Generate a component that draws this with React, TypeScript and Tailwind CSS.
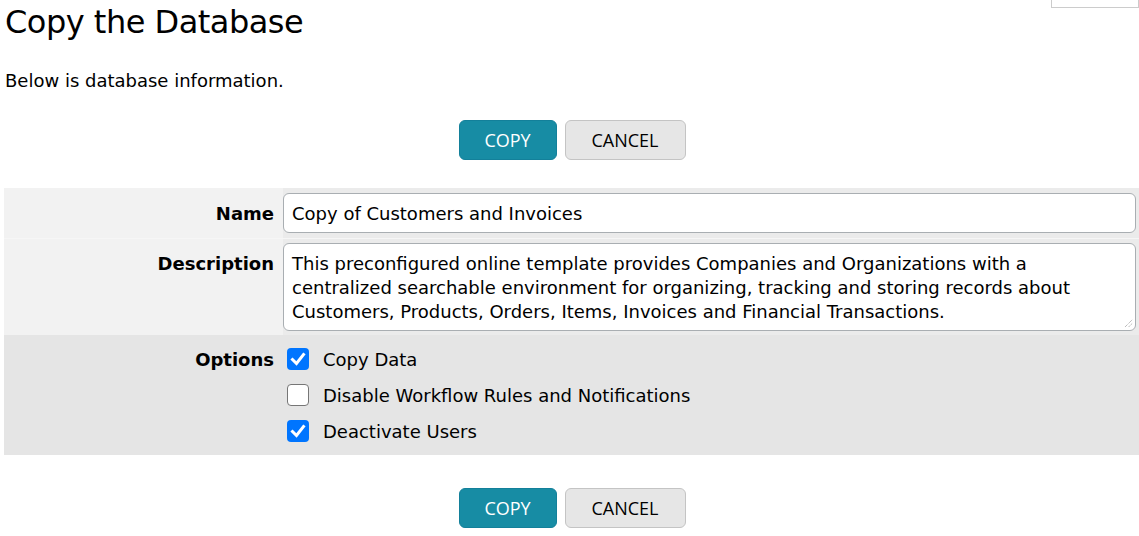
import React from 'react';

const options = [
  { label: 'Copy Data', checked: true },
  { label: 'Disable Workflow Rules and Notifications', checked: false },
  { label: 'Deactivate Users', checked: true },
];

function Buttons() {
  return (
    <div className="flex justify-center gap-2 pl-[5px] font-['Open_Sans',sans-serif] text-[18px] font-medium">
      <button className="w-[98px] h-10 rounded-md bg-[#178ca4] border border-[#13809a] text-white">COPY</button>
      <button className="w-[121px] h-10 rounded-md bg-[#e6e6e6] border border-[#c4c4c4] text-black">CANCEL</button>
    </div>
  );
}

function Check({ checked }: { checked: boolean }) {
  if (!checked) {
    return <div className="w-[22px] h-[22px] rounded-[4px] border-[1.5px] border-[#767676] bg-white" />;
  }
  return (
    <div className="w-[22px] h-[22px] rounded-[4px] bg-[#0075ff] flex items-center justify-center">
      <svg viewBox="0 0 22 22" className="w-[22px] h-[22px]">
        <path d="M5.5 11.5 L9.5 15.5 L16.5 6.5" fill="none" stroke="white" strokeWidth="3" strokeLinecap="square" />
      </svg>
    </div>
  );
}

export default function App() {
  return (
    <div className="relative min-h-screen bg-white text-black font-['DejaVu_Sans',Verdana,sans-serif]">
      <div className="absolute top-0 right-0 w-[88px] h-[8px] border border-t-0 border-[#cccccc]" />

      <div className="pl-[5px] pt-0">
        <h1 className="text-[32px] leading-[44px] tracking-[-0.5px]">Copy the Database</h1>
        <p className="mt-[25px] text-[18px] leading-[24px]">Below is database information.</p>
      </div>

      <div className="mt-[27px]">
        <Buttons />
      </div>

      <div className="mt-[28px] ml-[4px] text-[18px]">
        {/* Name */}
        <div className="flex">
          <div className="w-[279px] shrink-0 bg-[#f2f2f2] pr-[9px] pt-[14px] text-right font-bold leading-[24px]">Name</div>
          <div className="flex-1 bg-[#ebebeb] py-[5px] pr-[3px]">
            <div className="h-10 rounded-md border border-[#a9aeb2] bg-white px-[8px] pt-[1px] leading-[38px]">Copy of Customers and Invoices</div>
          </div>
        </div>
        {/* Description */}
        <div className="flex border-t border-[#f6f6f6]">
          <div className="w-[279px] shrink-0 bg-[#f2f2f2] pr-[9px] pt-[13px] text-right font-bold leading-[24px]">Description</div>
          <div className="flex-1 bg-[#ebebeb] py-[4px] pr-[3px]">
            <div className="relative h-[88px] rounded-md border border-[#a9aeb2] bg-white px-[8px] pt-[8px] leading-[24px]">
              This preconfigured online template provides Companies and Organizations with a<br />
              centralized searchable environment for organizing, tracking and storing records about<br />
              Customers, Products, Orders, Items, Invoices and Financial Transactions.
              <svg viewBox="0 0 10 10" className="absolute right-[2px] bottom-[2px] w-[9px] h-[9px]">
                <path d="M9 1 L1 9 M9 5 L5 9" stroke="#888" strokeWidth="1" strokeDasharray="1 1" />
              </svg>
            </div>
          </div>
        </div>
        {/* Options */}
        <div className="flex bg-[#e5e5e5]">
          <div className="w-[279px] shrink-0 pr-[9px] pt-[13px] text-right font-bold leading-[24px]">Options</div>
          <div className="flex-1 flex flex-col gap-[14px] pt-[13px] pb-[13px] pl-[4px]">
            {options.map((o) => (
              <div key={o.label} className="flex items-center gap-[14px] h-[22px]">
                <Check checked={o.checked} />
                <span className="leading-[22px] pt-[1px]">{o.label}</span>
              </div>
            ))}
          </div>
        </div>
      </div>

      <div className="mt-[33px] pb-[8px]">
        <Buttons />
      </div>
    </div>
  );
}
